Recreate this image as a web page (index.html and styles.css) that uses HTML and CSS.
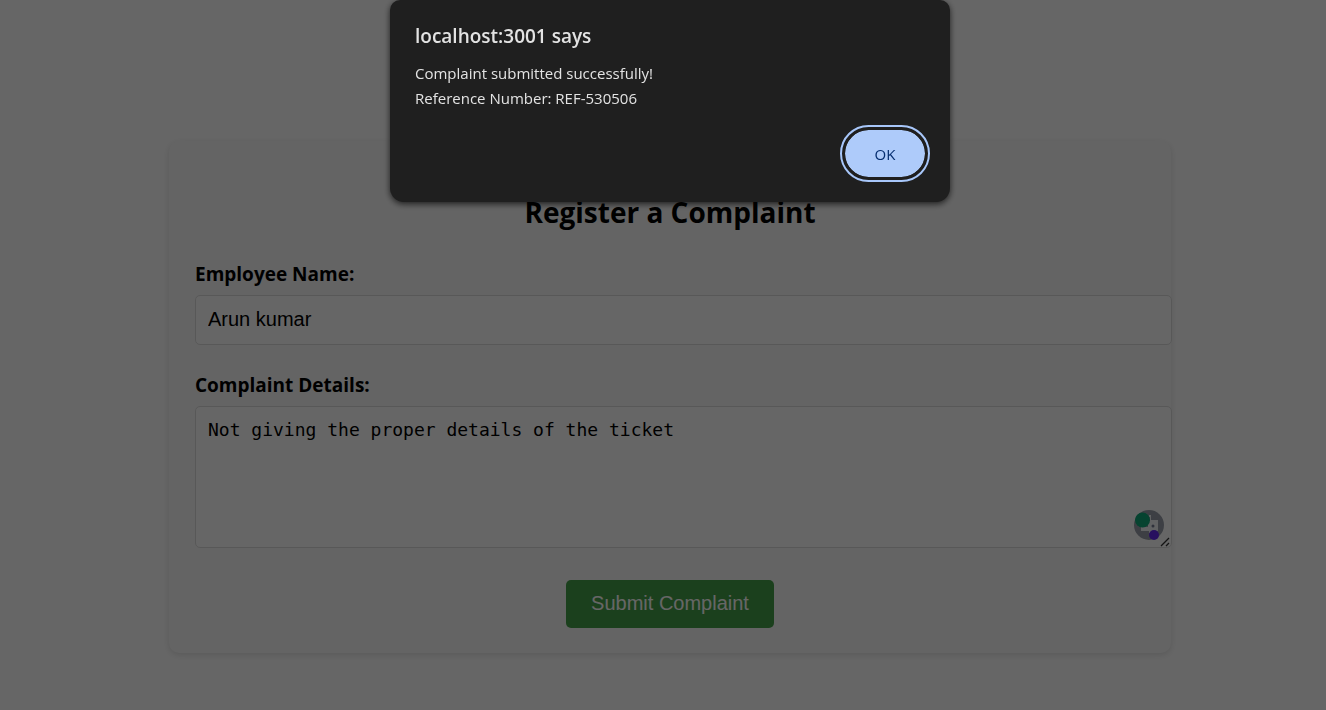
FILE: index.html
```html
<!DOCTYPE html>
<html lang="en">
<head>
<meta charset="utf-8">
<meta name="viewport" content="width=device-width, initial-scale=1">
<title>Register a Complaint</title>
<link rel="stylesheet" href="styles.css">
</head>
<body>
<main class="page">
  <section class="card">
    <h2 class="title">Register a Complaint</h2>
    <form class="form">
      <div class="field">
        <label class="label" for="name">Employee Name:</label>
        <input class="control" id="name" type="text" value="Arun kumar">
      </div>
      <div class="field">
        <label class="label" for="details">Complaint Details:</label>
        <div class="area-wrap">
          <textarea class="control area" id="details" spellcheck="false">Not giving the proper details of the ticket</textarea>
          <svg class="assistant" viewBox="0 0 32 32" aria-hidden="true">
            <circle cx="16" cy="16" r="15" fill="#999faa"/>
            <path d="M8 18h7v-6h2V8h-1V6h2v5h7v11h-4v2h-5v-2H8z" fill="#f2f4f8"/>
            <circle cx="20" cy="17" r="1.500" fill="#777e94"/>
            <circle cx="9.500" cy="11" r="7.500" fill="#0fa878"/>
            <circle cx="21" cy="26" r="5" fill="#6428ee"/>
          </svg>
          <svg class="grip" viewBox="0 0 10 10" aria-hidden="true"><path d="M1 9L9 1M6 9L9 6" stroke="#333" stroke-width="1.300" fill="none"/></svg>
        </div>
      </div>
      <button class="submit" type="button">Submit Complaint</button>
    </form>
  </section>
</main>
<div class="backdrop">
  <dialog class="alert" open aria-labelledby="alert-title">
    <h1 class="alert-title" id="alert-title">localhost:3001 says</h1>
    <p class="alert-text">Complaint submitted successfully!<br>Reference Number: REF-530506</p>
    <button class="ok" type="button">OK</button>
  </dialog>
</div>
</body>
</html>
```
FILE: styles.css
```css
body {
  margin: 0;
  background: #fff;
  color: #000;
  font-family: "Segoe UI", "Open Sans", "Noto Sans", sans-serif;
}

.page {
  padding: 141px 155px 56px 169px;
}

.card {
  padding: 50px 26px 25px;
  background: #f9f9f9;
  border-radius: 10px;
  box-shadow: 0 2px 6px rgba(0, 0, 0, 0.12);
}

.title {
  margin: 0 0 27px;
  font-size: 28px;
  line-height: 42px;
  text-align: center;
}

.form {
  display: flex;
  flex-direction: column;
}

.field {
  margin-bottom: 26px;
}

.label {
  display: block;
  margin-bottom: 7px;
  font-size: 19px;
  font-weight: 700;
  line-height: 28px;
}

.control {
  box-sizing: border-box;
  display: block;
  width: calc(100% + 27px);
  height: 50px;
  margin: 0;
  padding: 11px 12px 13px;
  border: 1px solid #ddd;
  border-radius: 5px;
  background: #fff;
  color: #000;
  font-family: Arial, "Liberation Sans", sans-serif;
  font-size: 20px;
}

.area-wrap {
  position: relative;
}

.area {
  height: 142px;
  font-family: Consolas, "DejaVu Sans Mono", monospace;
  font-size: 18px;
  line-height: 24px;
  resize: none;
}

.assistant {
  position: absolute;
  right: -20px;
  bottom: 7px;
  width: 32px;
  height: 32px;
}

.grip {
  position: absolute;
  right: -25px;
  bottom: 1px;
  width: 10px;
  height: 10px;
}

.submit {
  align-self: center;
  margin-top: 6px;
  padding: 11px 25px 13px;
  border: 0;
  border-radius: 5px;
  background: #45a049;
  color: #fff;
  font-family: Arial, "Liberation Sans", sans-serif;
  font-size: 20px;
  line-height: 24px;
}

.backdrop {
  position: fixed;
  inset: 0;
  display: flex;
  justify-content: center;
  align-items: flex-start;
  padding-left: 14px;
  background: rgba(0, 0, 0, 0.6);
}

.alert {
  position: static;
  box-sizing: border-box;
  display: flex;
  flex-direction: column;
  width: 560px;
  max-width: 100%;
  margin: 0;
  padding: 20px 23px 23px 25px;
  border: 0;
  border-radius: 10px 10px 14px 14px;
  background: #1f1f1f;
  color: #e3e3e3;
  box-shadow: 0 2px 6px rgba(0, 0, 0, 0.7);
}

.alert-title {
  margin: 0 0 9px;
  font-size: 19px;
  font-weight: 600;
  line-height: 32px;
}

.alert-text {
  margin: 0 0 17px;
  font-size: 15px;
  line-height: 25px;
}

.ok {
  align-self: flex-end;
  width: 84px;
  height: 51px;
  border: 2px solid #1f1f1f;
  border-radius: 26px;
  outline: 2px solid #a8c7fa;
  outline-offset: 1px;
  background: #aecbfa;
  background-clip: padding-box;
  color: #062e6f;
  font-family: inherit;
  font-size: 15px;
  font-weight: 500;
}
```
